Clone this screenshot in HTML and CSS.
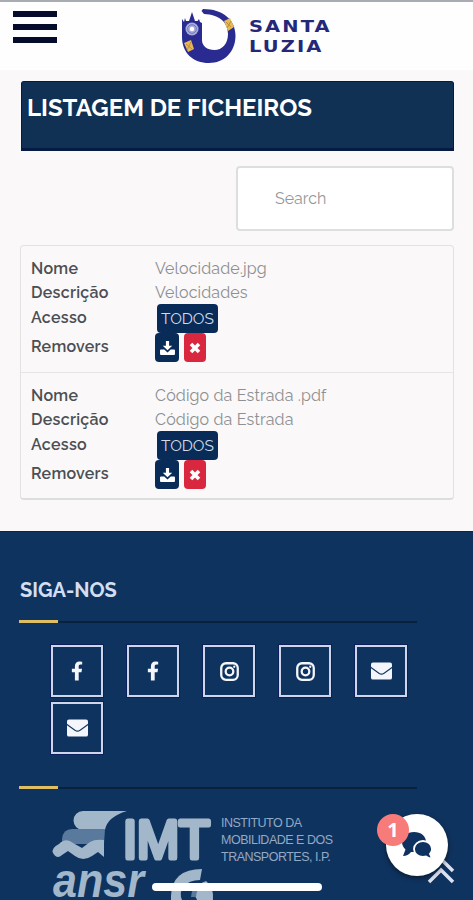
FILE: index.html
```html
<!DOCTYPE html>
<html lang="pt">
<head>
  <meta charset="UTF-8" />
  <meta name="viewport" content="width=device-width, initial-scale=1.0" />
  <title>Santa Luzia</title>
  <link rel="stylesheet" href="styles.css">
</head>
<body>
  <!-- Shared icons -->
  <svg class="sprite" width="0" height="0">
    <symbol id="facebook" viewBox="0 0 320 512"><path d="M280 288l14-93h-89v-60c0-25 12-50 52-50h41V7s-37-7-72-7C153 0 104 45 104 126v69H23v93h81v224h101V288z"/></symbol>
    <symbol id="instagram" viewBox="0 0 20 20"><rect x="1.3" y="1.3" width="17.4" height="17.4" rx="5" fill="none" stroke="currentColor" stroke-width="2.400"/><circle cx="10" cy="10" r="4" fill="none" stroke="currentColor" stroke-width="2.400"/><circle cx="15" cy="5" r="1.2"/></symbol>
    <symbol id="envelope" viewBox="0 0 22 18"><path d="M2 0h18a2 2 0 0 1 2 2v2.500l-9 6.500q-2 1.300-4 0L0 4.500V2a2 2 0 0 1 2-2z"/><path d="M0 6l8 5.800q3 2 6 0l8-5.800V16a2 2 0 0 1-2 2H2a2 2 0 0 1-2-2z"/></symbol>
    <symbol id="download" viewBox="0 0 16 15"><path d="M6.300 0h3.400v5h3.400L8 10 2.900 5h3.400z"/><path d="M1 9h3.500L8 12.300 11.500 9H15a1 1 0 0 1 1 1v4a1 1 0 0 1-1 1H1a1 1 0 0 1-1-1v-4a1 1 0 0 1 1-1z"/></symbol>
    <symbol id="times" viewBox="0 0 12 12"><path d="M2 2l8 8M10 2l-8 8" stroke="currentColor" stroke-width="3.600"/></symbol>
  </svg>

  <header>
    <button class="menu-btn" aria-label="Menu"><span></span><span></span><span></span></button>
    <a class="brand" href="#">
      <svg class="brand-mark" width="54" height="55" viewBox="0 0 54 55">
        <path d="M0 10l2 3 1-4 1 3h3l3-9 3 9h2.500l1.500-2 1 3 2 1v17c0 6 5 10 12.500 10C40 41 46 35 46 25 46 13 37 5.500 22 5L19.500 2 21 0c20 0 32.500 11 32.500 26.500C53.500 43 42 54 27 54 11 54 0 44 0 28z" fill="#292b91"/>
        <circle cx="10" cy="20" r="6.500" fill="#a9addb"/>
        <circle cx="10" cy="20" r="4.300" fill="none" stroke="#7075b8"/>
        <circle cx="10" cy="20" r="2.200" fill="#fff"/>
        <path d="M42 12l6-3 4 9-6 4zM2 34l7-3 3 9-6 3z" fill="#e5b957"/>
        <path d="M44 13l5 5M49 12l-4 7M4 35l6 5M9 33l-4 8" stroke="#c08e35" fill="none"/>
      </svg>
      <span class="brand-name"><span>SANTA</span><span>LUZIA</span></span>
    </a>
  </header>

  <main>
    <h1>LISTAGEM DE FICHEIROS</h1>
    <input class="search" type="text" placeholder="Search" />

    <div class="files">
      <dl class="file">
        <dt>Nome</dt><dd>Velocidade.jpg</dd>
        <dt>Descrição</dt><dd>Velocidades</dd>
        <dt>Acesso</dt><dd><span class="tag">TODOS</span></dd>
        <dt>Removers</dt>
        <dd class="actions">
          <button class="download-btn"><svg width="15" height="14"><use href="#download"/></svg></button>
          <button class="remove-btn"><svg width="12" height="12"><use href="#times"/></svg></button>
        </dd>
      </dl>
      <dl class="file">
        <dt>Nome</dt><dd>Código da Estrada .pdf</dd>
        <dt>Descrição</dt><dd>Código da Estrada</dd>
        <dt>Acesso</dt><dd><span class="tag">TODOS</span></dd>
        <dt>Removers</dt>
        <dd class="actions">
          <button class="download-btn"><svg width="15" height="14"><use href="#download"/></svg></button>
          <button class="remove-btn"><svg width="12" height="12"><use href="#times"/></svg></button>
        </dd>
      </dl>
    </div>
  </main>

  <footer>
    <h2>SIGA-NOS</h2>
    <div class="rule"></div>
    <div class="social">
      <a href="#"><svg width="12" height="20"><use href="#facebook"/></svg></a>
      <a href="#"><svg width="12" height="20"><use href="#facebook"/></svg></a>
      <a href="#"><svg width="19" height="19"><use href="#instagram"/></svg></a>
      <a href="#"><svg width="19" height="19"><use href="#instagram"/></svg></a>
      <a href="#"><svg width="21" height="18"><use href="#envelope"/></svg></a>
      <a href="#"><svg width="21" height="18"><use href="#envelope"/></svg></a>
    </div>
    <div class="rule"></div>

    <div class="partners">
      <div class="imt">
        <svg width="162" height="50" viewBox="0 0 162 50">
          <path d="M31 0h44Q55 6 53 19H31a9.500 9.500 0 0 1 0-19z" fill="#a3b7cb"/>
          <path d="M20 18h33l-1 15H10V28q1-10 10-10z" fill="#59799d"/>
          <path d="M7 33q7-7 14-1l9 5 8-6q5-3 14-2v17l-6-5-6 4q-9 6-17 0l-7-5-6 4Q5 49 1 42q-2-5 6-9z" fill="#a3b7cb"/>
          <text class="imt-text" x="71" y="47" textLength="87" lengthAdjust="spacingAndGlyphs">IMT</text>
        </svg>
        <p><span>INSTITUTO DA</span><span>MOBILIDADE E DOS</span><span>TRANSPORTES, I.P.</span></p>
      </div>
      <svg class="ansr" width="164" height="31" viewBox="0 0 164 31">
        <text class="ansr-text" x="1" y="28" textLength="91" lengthAdjust="spacingAndGlyphs">ansr</text>
        <path d="M150 0q-30 0-31 27v4h11q-3-7 1-13 6-7 17-7z" fill="#a3b7cb"/>
        <path d="M154 12q8 6 7 19h-16q-1-4-5-5 2-10 14-14z" fill="#a3b7cb"/>
        <path d="M147 14q-7 3-8 14h5q1-9 6-14z" fill="#59799d"/>
      </svg>
    </div>
  </footer>

  <!-- Floating widgets -->
  <a class="to-top" href="#" aria-label="Topo">
    <svg width="28" height="28" viewBox="0 0 28 28"><path d="M2 15L14 3l12 12M2 26l12-12 12 12" fill="none" stroke="#dde2f3" stroke-width="3.500"/></svg>
  </a>
  <button class="chat">
    <svg width="30" height="27" viewBox="0 0 30 27">
      <path d="M12 0C5 0 0 4.500 0 10c0 3 1.500 5.500 3.500 7.500L1 24q5 0 8-4h3c7 0 12-4 12-10S19 0 12 0z" fill="#0f315f"/>
      <path d="M21 9c-5 0-9 3.500-9 8s4 8 9 8l3-.500q3 2 6 2l-2-4.500q2-2 2-5c0-4.500-4-8-9-8z" fill="#0f315f" stroke="#fff" stroke-width="1.800"/>
    </svg>
    <span class="chat-badge">1</span>
  </button>
  <div class="home-bar"></div>
</body>
</html>
```
FILE: styles.css
```css
* {
  box-sizing: border-box;
}
html, body {
  margin: 0;
  padding: 0;
  overflow: hidden;
  height: 900px;
}
body {
  font-family: Raleway, Lato, sans-serif;
  font-size: 16px;
  background-color: #faf8f9;
  color: #4b4e53;
  position: relative;
}
button {
  border: none;
  padding: 0;
  cursor: pointer;
}
svg {
  display: block;
  fill: currentColor;
}
.sprite {
  position: absolute;
}

header {
  height: 70px;
  background-color: #fefefe;
  border-top: 2px solid #a9abb2;
  display: flex;
  align-items: flex-start;
  padding: 7px 13px 0;
}
.menu-btn {
  width: 44px;
  margin-top: 2px;
  background: none;
  display: flex;
  flex-direction: column;
  gap: 7px;
}
.menu-btn span {
  height: 6px;
  width: 44px;
  background-color: #050b2b;
}
.brand {
  display: flex;
  margin-left: 125px;
  text-decoration: none;
}
/* Wide lettering next to the mark */
.brand-name {
  margin: 8px 0 0 13px;
  font-family: "DejaVu Sans", sans-serif;
  font-weight: bold;
  font-size: 15px;
  line-height: 20px;
  letter-spacing: 1.6px;
  color: #252879;
}
.brand-name span {
  display: block;
  transform: scaleX(1.3);
  transform-origin: left;
}

main {
  height: 461px;
  padding: 11px 19px 0 20px;
}
h1 {
  height: 70px;
  margin: 0 0 0 1px;
  padding: 12px 5px;
  background-color: #103154;
  border: 1px solid #061b43;
  border-bottom-width: 3px;
  border-radius: 3px 3px 0 0;
  color: #fff;
  font-size: 24px;
  line-height: 28px;
  white-space: nowrap;
}
.search {
  display: block;
  width: 218px;
  height: 65px;
  margin: 15px 0 14px auto;
  padding: 0 37px;
  border: 2px solid #dddfdf;
  border-radius: 4px;
  background-color: #fff;
  font-family: inherit;
  font-size: 16px;
}
.search::placeholder {
  color: #979797;
}

.files {
  border: 1px solid #e2e2e3;
  border-bottom: 2px solid #dcdddd;
  border-radius: 4px;
  height: 255px;
}
.file {
  height: 126px;
  margin: 0;
  padding: 11px 10px 0;
  display: grid;
  grid-template-columns: 124px 1fr;
  grid-template-rows: 24px 23px 29px 29px;
  letter-spacing: 0.15px;
}
.file + .file {
  border-top: 1px solid #e4e5e6;
}
.file dt {
  font-weight: 600;
  letter-spacing: 0.28px;
  line-height: 24px;
}
.file dt:nth-of-type(n + 3) {
  padding-top: 2px;
}
.file dd {
  margin: 0;
  color: #8d8f91;
  line-height: 24px;
  white-space: nowrap;
}
.tag {
  display: block;
  width: 61px;
  height: 29px;
  margin-left: 2px;
  border-radius: 4px;
  background-color: #092b58;
  color: #d2dbe9;
  font-size: 15.5px;
  letter-spacing: 0;
  line-height: 29px;
  text-align: center;
}
.actions {
  display: flex;
  gap: 5px;
}
.actions button {
  height: 29px;
  border-radius: 4px;
  color: #fff;
  display: flex;
  align-items: center;
  justify-content: center;
}
.actions .download-btn {
  width: 24px;
  background-color: #092b58;
}
.actions .remove-btn {
  width: 22px;
  background-color: #d9273f;
}

footer {
  height: 369px;
  padding: 45px 56px 0 19px;
  background-color: #0f335f;
  border-top: 1px solid #06264f;
}
h2 {
  margin: 0 0 17px 1px;
  font-size: 20px;
  line-height: 26px;
  color: #d3def1;
}
.rule {
  height: 3px;
  background: linear-gradient(#dfbe61, #dfbe61) 0 0 / 39px 3px no-repeat,
    linear-gradient(#09213c, #09213c) 0 1px / 100% 2px no-repeat;
}
.social {
  display: grid;
  grid-template-columns: repeat(5, 52px);
  gap: 5px 24px;
  padding: 22px 0 32px 32px;
}
.social a {
  height: 52px;
  border: 2px solid #d1d5ec;
  outline: 1px solid #09205a;
  color: #f4f6fb;
  display: flex;
  align-items: center;
  justify-content: center;
}
.partners {
  padding: 22px 0 0 33px;
}
.partners svg {
  overflow: visible;
}
.imt {
  display: flex;
  gap: 7px;
}
.imt p {
  margin: 4px 0 -5px;
  font-family: "Liberation Sans", Arial, sans-serif;
  font-size: 12.5px;
  line-height: 17px;
  letter-spacing: -0.5px;
  color: #94a9c4;
}
.imt p span {
  display: block;
  white-space: nowrap;
}
.imt-text {
  font-family: "Liberation Sans", Arial, sans-serif;
  font-size: 54px;
  fill: #a3b7cb;
  stroke: #a3b7cb;
  stroke-width: 5px;
  stroke-linejoin: round;
}
.ansr {
  margin-top: 8px;
}
.ansr-text {
  font-family: "Liberation Sans", Arial, sans-serif;
  font-size: 49px;
  font-weight: bold;
  font-style: italic;
  fill: #a3b7cb;
}

.to-top {
  position: absolute;
  left: 427px;
  top: 856px;
}
.chat {
  position: absolute;
  left: 386px;
  top: 814px;
  width: 62px;
  height: 62px;
  border-radius: 50%;
  background-color: #fff;
  box-shadow: 0 2px 5px rgba(0, 0, 0, 0.5);
  display: flex;
  align-items: center;
  justify-content: center;
}
.chat-badge {
  position: absolute;
  left: -9px;
  top: 0;
  width: 32px;
  height: 32px;
  border-radius: 50%;
  background-color: #f77b79;
  color: #fff;
  font: bold 20px/32px "Open Sans", sans-serif;
}
.home-bar {
  position: absolute;
  left: 152px;
  top: 883px;
  width: 170px;
  height: 8px;
  border-radius: 4px;
  background-color: #fff;
}
```
